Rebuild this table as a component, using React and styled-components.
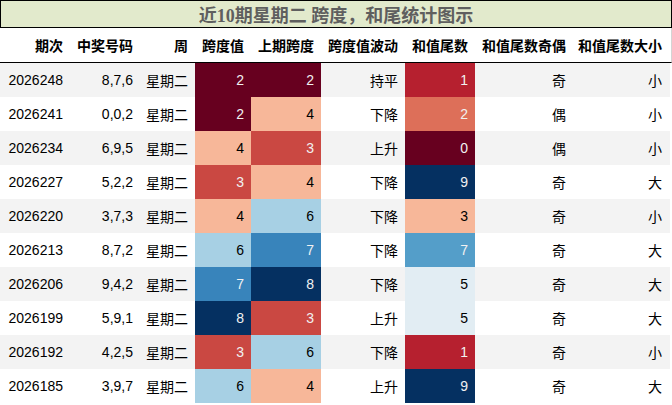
import React from "react";
import styled, { createGlobalStyle } from "styled-components";

const Global = createGlobalStyle`
  html, body { margin: 0; padding: 0; background: #ffffff; }
  body { font-family: "Liberation Sans", "Noto Sans CJK SC", sans-serif; }
`;

const COLS = "70px 70px 55px 56px 70px 84px 70px 98px 96px";

const Table = styled.div`
  width: 672px;
  display: flex;
  flex-direction: column;
`;

const Title = styled.div`
  box-sizing: border-box;
  height: 28px;
  width: 672px;
  border: 1px solid #000;
  background: #e2eacc;
  display: flex;
  align-items: center;
  justify-content: center;
  font-family: "Liberation Serif", "Noto Sans CJK SC", serif;
  font-weight: bold;
  font-size: 18px;
  color: #5f5f5f;
`;

const HeaderRow = styled.div`
  box-sizing: border-box;
  display: grid;
  grid-template-columns: ${COLS};
  height: 35px;
  width: 672px;
  border-bottom: 1px solid #000;
  border-right: 1px solid #d4d4d4;
`;

const HeadCell = styled.div`
  display: flex;
  align-items: center;
  justify-content: flex-end;
  padding-right: 7px;
  font-weight: bold;
  font-size: 14px;
  color: #000;
  white-space: nowrap;
`;

const Row = styled.div`
  display: grid;
  grid-template-columns: ${COLS};
  height: 34px;
  width: 670px;
  background: ${(p) => (p.$alt ? "#f3f3f3" : "#ffffff")};
`;

const Cell = styled.div`
  display: flex;
  align-items: center;
  justify-content: flex-end;
  padding-right: 7px;
  font-size: 14px;
  color: ${(p) => p.$fg || "#000"};
  background: ${(p) => p.$bg || "transparent"};
  white-space: nowrap;
`;

const headers = ["期次", "中奖号码", "周", "跨度值", "上期跨度", "跨度值波动", "和值尾数", "和值尾数奇偶", "和值尾数大小"];

const rows = [
  ["2026248", "8,7,6", "星期二", 2, 2, "持平", 1, "奇", "小"],
  ["2026241", "0,0,2", "星期二", 2, 4, "下降", 2, "偶", "小"],
  ["2026234", "6,9,5", "星期二", 4, 3, "上升", 0, "偶", "小"],
  ["2026227", "5,2,2", "星期二", 3, 4, "下降", 9, "奇", "大"],
  ["2026220", "3,7,3", "星期二", 4, 6, "下降", 3, "奇", "小"],
  ["2026213", "8,7,2", "星期二", 6, 7, "下降", 7, "奇", "大"],
  ["2026206", "9,4,2", "星期二", 7, 8, "下降", 5, "奇", "大"],
  ["2026199", "5,9,1", "星期二", 8, 3, "上升", 5, "奇", "大"],
  ["2026192", "4,2,5", "星期二", 3, 6, "下降", 1, "奇", "小"],
  ["2026185", "3,9,7", "星期二", 6, 4, "上升", 9, "奇", "大"],
];

const spanColors = {
  2: ["#67001f", "#f1f1f1"],
  3: ["#ca4842", "#f1f1f1"],
  4: ["#f7b799", "#000"],
  6: ["#a7d0e4", "#000"],
  7: ["#3884bb", "#f1f1f1"],
  8: ["#053061", "#f1f1f1"],
};

const tailColors = {
  0: ["#67001f", "#f1f1f1"],
  1: ["#b6202f", "#f1f1f1"],
  2: ["#dd6f59", "#f1f1f1"],
  3: ["#f7b799", "#000"],
  5: ["#e2edf3", "#000"],
  7: ["#549ec9", "#f1f1f1"],
  9: ["#053061", "#f1f1f1"],
};

export default function App() {
  return (
    <>
      <Global />
      <Table>
        <Title>近10期星期二 跨度，和尾统计图示</Title>
        <HeaderRow>
          {headers.map((h) => (
            <HeadCell key={h}>{h}</HeadCell>
          ))}
        </HeaderRow>
        {rows.map((r, i) => (
          <Row key={r[0]} $alt={i % 2 === 0}>
            <Cell>{r[0]}</Cell>
            <Cell>{r[1]}</Cell>
            <Cell>{r[2]}</Cell>
            <Cell $bg={spanColors[r[3]][0]} $fg={spanColors[r[3]][1]}>{r[3]}</Cell>
            <Cell $bg={spanColors[r[4]][0]} $fg={spanColors[r[4]][1]}>{r[4]}</Cell>
            <Cell>{r[5]}</Cell>
            <Cell $bg={tailColors[r[6]][0]} $fg={tailColors[r[6]][1]}>{r[6]}</Cell>
            <Cell>{r[7]}</Cell>
            <Cell>{r[8]}</Cell>
          </Row>
        ))}
      </Table>
    </>
  );
}
